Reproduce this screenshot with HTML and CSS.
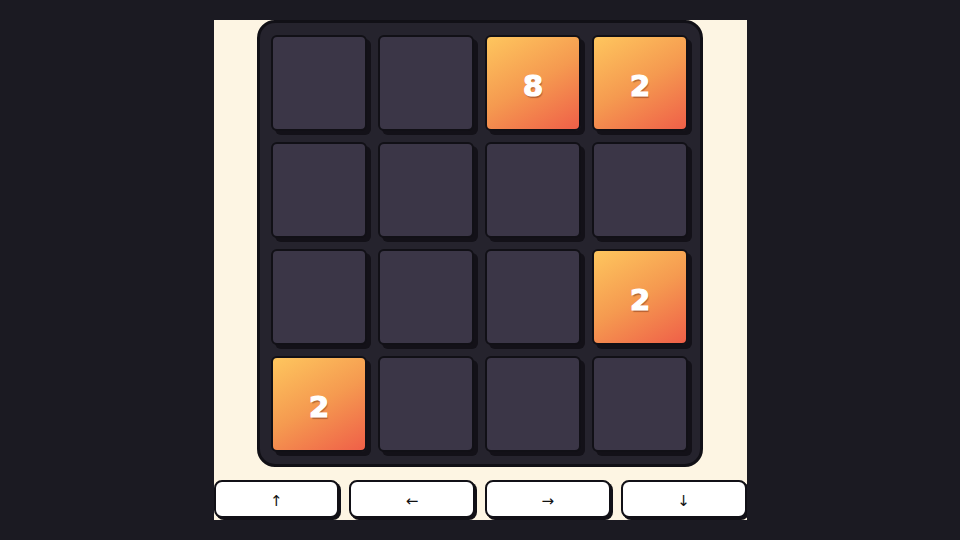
FILE: index.html
```html
<!DOCTYPE html>
<html lang="en">
<head>
  <meta charset="UTF-8">
  <meta name="viewport" content="width=device-width, initial-scale=1.0">
  <title>2048</title>
  <link rel="stylesheet" href="styles.css">
</head>
<body>
  <main class="game">
    <!-- Board -->
    <section class="board">
      <div class="tile"></div>
      <div class="tile"></div>
      <div class="tile filled">8</div>
      <div class="tile filled">2</div>

      <div class="tile"></div>
      <div class="tile"></div>
      <div class="tile"></div>
      <div class="tile"></div>

      <div class="tile"></div>
      <div class="tile"></div>
      <div class="tile"></div>
      <div class="tile filled">2</div>

      <div class="tile filled">2</div>
      <div class="tile"></div>
      <div class="tile"></div>
      <div class="tile"></div>
    </section>

    <!-- Controls -->
    <nav class="controls">
      <button class="move-btn">&uarr;</button>
      <button class="move-btn">&larr;</button>
      <button class="move-btn">&rarr;</button>
      <button class="move-btn">&darr;</button>
    </nav>
  </main>
</body>
</html>
```

FILE: styles.css
```css
/* General Styles */
* {
  margin: 0;
  padding: 0;
  box-sizing: border-box;
}

body {
  font-family: 'DejaVu Sans', sans-serif;
  background: #1b1a22;
  height: 540px;
  padding-top: 20px;
  overflow: hidden;
}

.game {
  width: 533px;
  height: 500px;
  margin: 0 auto;
  background: #fdf5e3;
  overflow: hidden;
  display: flex;
  flex-direction: column;
  align-items: center;
}

/* Board */
.board {
  width: 446px;
  height: 447px;
  background: #25232d;
  border: 3px solid #111016;
  border-radius: 18px;
  padding: 12px 11px;
  display: grid;
  grid-template-columns: repeat(4, 96px);
  grid-template-rows: repeat(4, 96px);
  gap: 11px;
}

.tile {
  background: #3b3647;
  border: 2px solid #111016;
  border-radius: 6px;
  box-shadow: 4px 4px 0 #131118;
  display: flex;
  justify-content: center;
  align-items: center;
  padding-top: 6px;
  color: #fff;
  font-size: 29px;
  font-weight: bold;
  font-family: 'DejaVu Sans', sans-serif;
  -webkit-text-stroke: 1.2px #fff;
  text-shadow: 1px 2px 1px rgba(90, 30, 10, 0.4);
}

.tile.filled {
  background: linear-gradient(150deg, #fec65e, #f59a50 50%, #ef5f48);
}

/* Controls */
.controls {
  width: 533px;
  margin-top: 13px;
  display: flex;
  gap: 10px;
}

.move-btn {
  flex: 1;
  height: 38px;
  background: #fff;
  border: 2px solid #111016;
  border-radius: 8px;
  box-shadow: 2px 2px 0 #111016;
  font-family: 'DejaVu Sans', sans-serif;
  font-size: 15px;
  padding-top: 3px;
  color: #111;
  cursor: pointer;
}
```
